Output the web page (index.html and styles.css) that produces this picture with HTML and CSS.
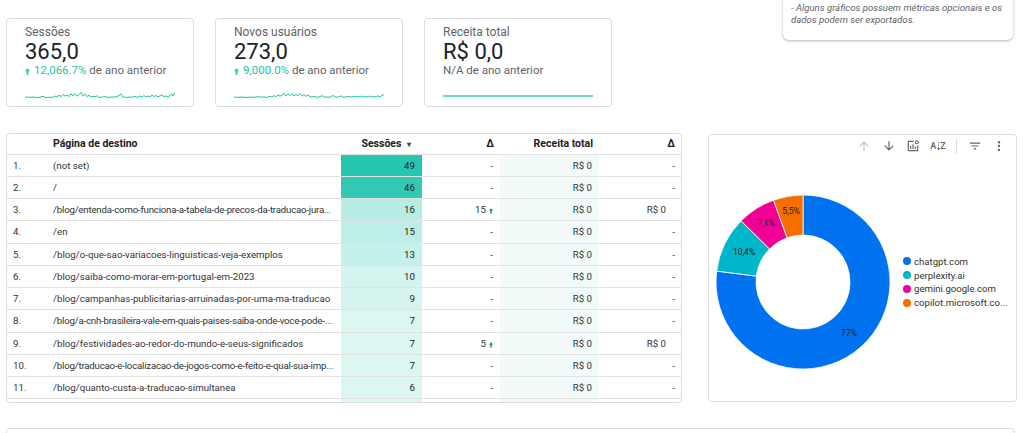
FILE: index.html
```html
<!DOCTYPE html>
<html lang="pt-BR">
<head>
<meta charset="utf-8">
<title>Relatório</title>
<link rel="stylesheet" href="styles.css">
</head>
<body>
<div class="page">
  <div class="top">
    <div class="score">
      <div class="s-label">Sessões</div>
      <div class="s-value">365,0</div>
      <div class="s-change"><span class="up"><svg class="uparrow" viewBox="0 0 6 8"><path d="M3 0L6 3.6H4V8H2V3.6H0Z"/></svg>12,066.7%</span> de ano anterior</div>
      <svg class="spark" viewBox="0 0 150 8" preserveAspectRatio="none"><polyline points="0,6 4,6.3 8,6 12,6.6 15,6.2 18,5.4 21,6.6 25,6.2 28,6.4 30,5 32,6 34,4 36,5.6 38,3.4 40,5.2 42,4 44,5.6 46,2.8 48,5 50,2.6 52,5.2 54,3.8 56,1.4 58,5.2 60,3 62,5.6 64,4.2 66,6 68,5.2 70,5.6 72,4.8 74,6.4 77,6 80,5.6 83,6.4 86,6.1 90,6 92,5.4 94,4.6 96,3 98,6 101,6.4 104,6 107,6.2 110,5.4 112,6.4 115,5 117,6 119,4.6 121,6 123,5 125,6 127,4 129,5.6 131,4.4 133,6 135,5 137,4 139,5.6 141,5 143,6 145,4.4 147,3.2 148,5 150,1.6"/></svg>
    </div>
    <div class="score">
      <div class="s-label">Novos usuários</div>
      <div class="s-value">273,0</div>
      <div class="s-change"><span class="up"><svg class="uparrow" viewBox="0 0 6 8"><path d="M3 0L6 3.6H4V8H2V3.6H0Z"/></svg>9,000.0%</span> de ano anterior</div>
      <svg class="spark" viewBox="0 0 150 8" preserveAspectRatio="none"><polyline points="0,6 4,6.4 8,6 12,6.5 16,6 20,6.4 24,5.6 27,6.3 30,5.8 33,6.4 36,5.4 38,6 40,4.6 42,5.8 44,3.8 46,5.2 48,4.2 50,2.2 52,5 54,3 56,4.6 58,2.6 60,5 62,3.4 64,4.8 66,2.4 68,5.2 70,3.6 72,5.4 74,4 76,5.8 78,6 80,5.4 82,6.2 85,6 88,4.6 90,6.2 93,6 96,6.4 99,4.4 101,6 104,6.2 107,4.8 109,6.2 112,6 115,5.4 117,6.2 120,5.2 122,6 124,5.4 126,6.2 128,5 130,6 132,5.4 134,6.2 136,5 138,6 140,5.6 142,6 144,4.8 146,5.8 148,4.2 150,3.6"/></svg>
    </div>
    <div class="score">
      <div class="s-label">Receita total</div>
      <div class="s-value">R$ 0,0</div>
      <div class="s-change muted">N/A de ano anterior</div>
      <div class="flatline"></div>
    </div>
    <div class="note">
      <p>- Alguns gráficos possuem métricas opcionais e os dados podem ser exportados.</p>
    </div>
  </div>

  <div class="main">
    <div class="table-card">
      <table class="grid">
        <colgroup>
          <col class="c-num"><col class="c-page"><col class="c-ses"><col class="c-d1"><col class="c-rec"><col class="c-d2">
        </colgroup>
        <thead>
          <tr>
            <th></th>
            <th class="left">Página de destino</th>
            <th class="right sort">Sessões <span class="caret">▾</span></th>
            <th class="right">Δ</th>
            <th class="right">Receita total</th>
            <th class="right">Δ</th>
          </tr>
        </thead>
        <tbody>
          <tr><td class="num">1.</td><td class="pg">(not set)</td><td class="ses" style="background:rgb(38,199,176)">49</td><td class="d">-</td><td class="rec">R$ 0</td><td class="d2">-</td></tr>
          <tr><td class="num">2.</td><td class="pg">/</td><td class="ses" style="background:rgb(51,202,181)">46</td><td class="d">-</td><td class="rec">R$ 0</td><td class="d2">-</td></tr>
          <tr><td class="num">3.</td><td class="pg trunc">/blog/entenda-como-funciona-a-tabela-de-precos-da-traducao-jura...</td><td class="ses" style="background:rgb(184,237,229)">16</td><td class="d">15<svg class="garrow" viewBox="0 0 6 8"><path d="M3 0L6 3.6H4V8H2V3.6H0Z"/></svg></td><td class="rec">R$ 0</td><td class="d2 val">R$ 0</td></tr>
          <tr><td class="num">4.</td><td class="pg">/en</td><td class="ses" style="background:rgb(189,238,231)">15</td><td class="d">-</td><td class="rec">R$ 0</td><td class="d2">-</td></tr>
          <tr><td class="num">5.</td><td class="pg">/blog/o-que-sao-variacoes-linguisticas-veja-exemplos</td><td class="ses" style="background:rgb(197,240,234)">13</td><td class="d">-</td><td class="rec">R$ 0</td><td class="d2">-</td></tr>
          <tr><td class="num">6.</td><td class="pg">/blog/saiba-como-morar-em-portugal-em-2023</td><td class="ses" style="background:rgb(211,244,239)">10</td><td class="d">-</td><td class="rec">R$ 0</td><td class="d2">-</td></tr>
          <tr><td class="num">7.</td><td class="pg">/blog/campanhas-publicitarias-arruinadas-por-uma-ma-traducao</td><td class="ses" style="background:rgb(215,245,240)">9</td><td class="d">-</td><td class="rec">R$ 0</td><td class="d2">-</td></tr>
          <tr><td class="num">8.</td><td class="pg trunc">/blog/a-cnh-brasileira-vale-em-quais-paises-saiba-onde-voce-pode-...</td><td class="ses" style="background:rgb(220,246,242)">7</td><td class="d">-</td><td class="rec">R$ 0</td><td class="d2">-</td></tr>
          <tr><td class="num">9.</td><td class="pg">/blog/festividades-ao-redor-do-mundo-e-seus-significados</td><td class="ses" style="background:rgb(220,246,242)">7</td><td class="d">5<svg class="garrow" viewBox="0 0 6 8"><path d="M3 0L6 3.6H4V8H2V3.6H0Z"/></svg></td><td class="rec">R$ 0</td><td class="d2 val">R$ 0</td></tr>
          <tr><td class="num">10.</td><td class="pg trunc">/blog/traducao-e-localizacao-de-jogos-como-e-feito-e-qual-sua-imp...</td><td class="ses" style="background:rgb(220,246,242)">7</td><td class="d">-</td><td class="rec">R$ 0</td><td class="d2">-</td></tr>
          <tr><td class="num">11.</td><td class="pg">/blog/quanto-custa-a-traducao-simultanea</td><td class="ses" style="background:rgb(222,246,243)">6</td><td class="d">-</td><td class="rec">R$ 0</td><td class="d2">-</td></tr>
          <tr class="partial"><td></td><td></td><td class="ses" style="background:rgb(222,246,243)"></td><td></td><td class="rec"></td><td></td></tr>
        </tbody>
      </table>
    </div>

    <div class="chart-card">
      <div class="toolbar">
        <svg class="ico disabled" viewBox="0 0 24 24"><path d="M4 12l1.41 1.41L11 7.83V20h2V7.83l5.58 5.59L20 12l-8-8-8 8z"/></svg>
        <svg class="ico" viewBox="0 0 24 24"><path d="M20 12l-1.41-1.41L13 16.17V4h-2v12.17l-5.58-5.59L4 12l8 8 8-8z"/></svg>
        <svg class="ico" viewBox="0 0 24 24"><path d="M13 3H5a2 2 0 0 0-2 2v14a2 2 0 0 0 2 2h14a2 2 0 0 0 2-2v-8h-2v8H5V5h8z M7 12h2v5H7z M11 9h2v8h-2z M15 13h2v4h-2z"/><circle cx="18.5" cy="5.5" r="2.6" fill="none" stroke="currentColor" stroke-width="1.8"/></svg>
        <span class="az"><span>A</span><svg class="azarrow" viewBox="0 0 4 12"><path d="M2 1v1.5M2 4v1.5M2 7v2.5" stroke="currentColor" stroke-width="1.2"/><path d="M0 9l2 3 2-3z"/></svg><span>Z</span></span>
        <span class="divider"></span>
        <svg class="ico" viewBox="0 0 24 24"><path d="M10 18h4v-2h-4v2zM3 6v2h18V6H3zm3 7h12v-2H6v2z"/></svg>
        <svg class="ico" viewBox="0 0 24 24"><circle cx="12" cy="5.5" r="2"/><circle cx="12" cy="12" r="2"/><circle cx="12" cy="18.5" r="2"/></svg>
      </div>
      <div class="chart-body">
        <svg class="donut" viewBox="0 0 180 180">
          <path fill="#0072f0" stroke="#fff" stroke-width="0.8" d="M90 3 A87 87 0 1 1 3.69 79.10 L43.37 84.11 A47 47 0 1 0 90 43 Z"/>
          <path fill="#00b6cb" stroke="#fff" stroke-width="0.8" d="M3.69 79.10 A87 87 0 0 1 28.10 28.87 L56.56 56.98 A47 47 0 0 0 43.37 84.11 Z"/>
          <path fill="#f10096" stroke="#fff" stroke-width="0.8" d="M28.10 28.87 A87 87 0 0 1 60.53 8.14 L74.08 45.78 A47 47 0 0 0 56.56 56.98 Z"/>
          <path fill="#f66d00" stroke="#fff" stroke-width="0.8" d="M60.53 8.14 A87 87 0 0 1 90 3 L90 43 A47 47 0 0 0 74.08 45.78 Z"/>
          <text class="dl" x="136" y="144" text-anchor="middle">77%</text>
          <text class="dl" x="31" y="63" text-anchor="middle">10,4%</text>
          <text class="dl" x="53" y="34" text-anchor="middle">7,1%</text>
          <text class="dl" x="78" y="22" text-anchor="middle">5,5%</text>
        </svg>
        <ul class="legend">
          <li><span class="dot c1"></span>chatgpt.com</li>
          <li><span class="dot c2"></span>perplexity.ai</li>
          <li><span class="dot c3"></span>gemini.google.com</li>
          <li><span class="dot c4"></span>copilot.microsoft.co...</li>
        </ul>
      </div>
    </div>
  </div>

  <div class="bottom-card"></div>
</div>
</body>
</html>
```

FILE: styles.css
```css
* { box-sizing: border-box; }
html, body { margin: 0; padding: 0; background: #fff; }
body {
  font-family: Roboto, "Liberation Sans", Arial, sans-serif;
  color: #202124;
  overflow: hidden;
  width: 1024px;
  height: 433px;
}
.page { width: 1024px; }

/* ---------- top row ---------- */
.top {
  display: flex;
  align-items: flex-start;
  gap: 21px;
  height: 133px;
  padding-left: 6px;
}
.score {
  margin-top: 18px;
  width: 188px;
  height: 89px;
  border: 1px solid #dadce0;
  border-radius: 4px;
  padding: 6px 18px 7px 18px;
  display: flex;
  flex-direction: column;
}
.s-label {
  font-size: 12px;
  line-height: 14px;
  color: #5f6368;
}
.s-value {
  font-size: 22px;
  line-height: 23px;
  color: #202124;
  margin-top: 1px;
}
.s-change {
  font-size: 11.5px;
  line-height: 14px;
  color: #5f6368;
}
.s-change .up { color: #1ec4a8; }
.uparrow {
  width: 5px;
  height: 7px;
  fill: #1ec4a8;
  margin-right: 4px;
  vertical-align: -1px;
}
.spark {
  margin-top: auto;
  width: 150px;
  height: 8px;
  overflow: visible;
}
.spark polyline {
  fill: none;
  stroke: #1ec4a8;
  stroke-width: 1;
  vector-effect: non-scaling-stroke;
}
.flatline {
  margin-top: auto;
  margin-bottom: 2px;
  width: 150px;
  height: 2px;
  background: #6fd9c8;
}
.note {
  margin-left: auto;
  margin-right: 11px;
  margin-top: -22px;
  width: 230px;
  height: 62px;
  background: #fff;
  border-radius: 0 0 6px 6px;
  box-shadow: 0 1px 3px rgba(0,0,0,0.28), 0 0 1px rgba(0,0,0,0.15);
  padding: 24px 10px 0 8px;
}
.note p {
  margin: 0;
  font-size: 9.6px;
  line-height: 12px;
  font-style: italic;
  color: #5f6368;
}

/* ---------- main row ---------- */
.main {
  display: flex;
  align-items: flex-start;
  gap: 26px;
  padding-left: 6px;
}
.table-card {
  width: 676px;
  height: 270px;
  border: 1px solid #dadce0;
  border-radius: 4px;
  overflow: hidden;
}
.grid {
  width: 674px;
  border-collapse: collapse;
  table-layout: fixed;
  font-size: 9.7px;
  color: #333;
}
.c-num { width: 40px; }
.c-page { width: 294px; }
.c-ses { width: 81px; }
.c-d1 { width: 78px; }
.c-rec { width: 99px; }
.c-d2 { width: 82px; }
.grid th {
  height: 20px;
  font-size: 10.5px;
  font-weight: 700;
  color: #202124;
  padding: 0 6px;
  white-space: nowrap;
}
.grid th.left { text-align: left; }
.grid th.right { text-align: right; }
.grid th.sort { padding-right: 11px; }
.caret { font-size: 8px; color: #444; margin-left: 3px; }
.grid tbody tr { height: 22.25px; }
.grid td {
  padding: 0 7px 0 6px;
  border-top: 1px solid #e2e2e2;
  white-space: nowrap;
  overflow: hidden;
}
.grid td.num { padding-left: 6px; }
.grid td.pg { text-align: left; padding-right: 0; }
.grid td.pg.trunc { letter-spacing: -0.22px; }
.grid td.ses { text-align: right; padding-right: 7px; color: #202124; }
.grid td.d { text-align: right; padding-right: 7px; }
.grid td.rec { text-align: right; padding-right: 7px; background: #f3fbfa; }
.grid td.d2 { text-align: right; padding-right: 6px; }
.grid td.d2.val { padding-right: 15px; }
.garrow {
  width: 4px;
  height: 6px;
  fill: #1e8e3e;
  margin-left: 3px;
  vertical-align: -1px;
}

/* ---------- chart card ---------- */
.chart-card {
  margin-top: 1px;
  width: 309px;
  height: 268px;
  border: 1px solid #dadce0;
  border-radius: 4px;
}
.toolbar {
  display: flex;
  justify-content: flex-end;
  align-items: center;
  gap: 8px;
  height: 22px;
  padding-right: 9px;
  color: #5f6368;
}
.ico {
  width: 16px;
  height: 14px;
  fill: currentColor;
  color: #5f6368;
}
.ico.disabled { color: #c4c4c4; }
.toolbar .ico:nth-child(2) { margin-left: 1px; }
.az {
  width: 16px;
  margin-left: 1px;
  display: flex;
  align-items: center;
  justify-content: center;
  font-size: 9px;
  font-weight: 500;
  color: #5f6368;
  line-height: 1;
}
.azarrow { width: 3px; height: 10px; fill: currentColor; margin: 0 0.5px; }
.divider {
  width: 1px;
  height: 15px;
  background: #dadce0;
  margin: 0 2px;
}
.chart-body {
  display: flex;
  align-items: center;
  padding: 35px 0 0 4px;
}
.donut {
  width: 180px;
  height: 180px;
  flex: none;
}
.dl {
  font-size: 8.5px;
  fill: #202124;
  font-family: Roboto, "Liberation Sans", sans-serif;
}
.legend {
  list-style: none;
  margin: 0 0 0 10px;
  padding: 0;
  font-size: 9.6px;
  color: #333;
}
.legend li {
  display: flex;
  align-items: center;
  height: 13.7px;
  white-space: nowrap;
}
.dot {
  width: 8px;
  height: 8px;
  border-radius: 50%;
  margin-right: 3px;
  flex: none;
}
.c1 { background: #0072f0; }
.c2 { background: #00b6cb; }
.c3 { background: #f10096; }
.c4 { background: #f66d00; }

/* ---------- bottom ---------- */
.bottom-card {
  margin: 25px 0 0 6px;
  width: 1009px;
  height: 40px;
  border: 1px solid #dadce0;
  border-radius: 4px;
}
```
